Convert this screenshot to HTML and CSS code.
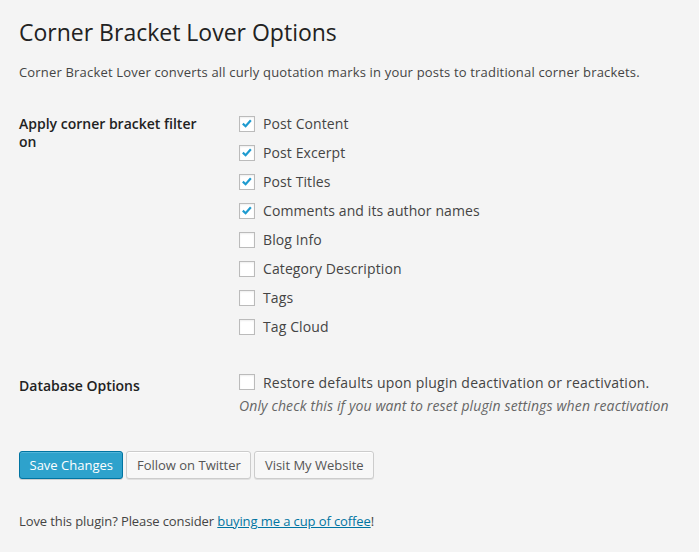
FILE: index.html
```html
<!DOCTYPE html>
<html>
<head>
<meta charset="utf-8">
<link rel="stylesheet" href="styles.css">
</head>
<body>
<div class="wrap">
  <h2 class="title">Corner Bracket Lover Options</h2>
  <p class="intro">Corner Bracket Lover converts all curly quotation marks in your posts to traditional corner brackets.</p>
  <div class="form-table">
    <div class="th th-first">Apply corner bracket filter on</div>
    <div class="td td-first">
      <label class="opt"><span class="cb"><svg viewBox="0 0 16 16" width="14" height="14"><path d="M3.2 7.6 L6.4 10.6 L12.4 3.8" fill="none" stroke="#1e9bd0" stroke-width="2.5"/></svg></span>Post Content</label>
      <label class="opt"><span class="cb"><svg viewBox="0 0 16 16" width="14" height="14"><path d="M3.2 7.6 L6.4 10.6 L12.4 3.8" fill="none" stroke="#1e9bd0" stroke-width="2.5"/></svg></span>Post Excerpt</label>
      <label class="opt"><span class="cb"><svg viewBox="0 0 16 16" width="14" height="14"><path d="M3.2 7.6 L6.4 10.6 L12.4 3.8" fill="none" stroke="#1e9bd0" stroke-width="2.5"/></svg></span>Post Titles</label>
      <label class="opt"><span class="cb"><svg viewBox="0 0 16 16" width="14" height="14"><path d="M3.2 7.6 L6.4 10.6 L12.4 3.8" fill="none" stroke="#1e9bd0" stroke-width="2.5"/></svg></span>Comments and its author names</label>
      <label class="opt"><span class="cb"></span>Blog Info</label>
      <label class="opt"><span class="cb"></span>Category Description</label>
      <label class="opt"><span class="cb"></span>Tags</label>
      <label class="opt"><span class="cb"></span>Tag Cloud</label>
    </div>
    <div class="th th-second">Database Options</div>
    <div class="td td-second">
      <label class="opt opt-restore"><span class="cb"></span>Restore defaults upon plugin deactivation or reactivation.</label>
      <p class="description">Only check this if you want to reset plugin settings when reactivation</p>
    </div>
  </div>
  <p class="submit"><a class="button button-primary">Save Changes</a><a class="button">Follow on Twitter</a><a class="button">Visit My Website</a></p>
  <p class="footer">Love this plugin? Please consider <a class="link" href="#">buying me a cup of coffee</a>!</p>
</div>
</body>
</html>
```
FILE: styles.css
```css
html, body {
  margin: 0;
  padding: 0;
  background: #f4f4f4;
}
body {
  font-family: "Open Sans", sans-serif;
  font-size: 13px;
  color: #444;
}
.wrap {
  padding: 0 19px;
}
.title {
  margin: 0;
  padding-top: 18px;
  font-size: 23px;
  font-weight: 400;
  line-height: 29px;
  color: #222;
}
.intro {
  margin: 15px 0 0;
  line-height: 20px;
  letter-spacing: 0.18px;
}
.form-table {
  display: grid;
  grid-template-columns: 220px 1fr;
  margin-top: 13px;
}
.th {
  font-size: 14px;
  font-weight: 600;
  line-height: 18px;
  color: #222;
  width: 190px;
  padding-top: 20px;
}
.td {
  padding-top: 15px;
  padding-bottom: 15px;
}
.td-first {
  padding-top: 14px;
  padding-bottom: 16px;
}
.opt {
  display: flex;
  align-items: center;
  height: 29px;
  font-size: 14px;
  color: #444;
  letter-spacing: 0.1px;
}
.opt-restore {
  height: 20px;
  letter-spacing: 0.22px;
}
.cb {
  box-sizing: border-box;
  width: 16px;
  height: 16px;
  border: 1px solid #bbb;
  background: #fff;
  box-shadow: inset 0 1px 2px rgba(0,0,0,.07);
  margin-right: 8px;
  display: flex;
  align-items: center;
  justify-content: center;
  flex: none;
}
.cb svg {
  display: block;
}
.description {
  margin: 5px 0 0;
  font-size: 14px;
  font-style: italic;
  line-height: 18px;
  color: #666;
  letter-spacing: 0.13px;
}
.submit {
  margin: 21px 0 0;
  display: flex;
  gap: 3px;
}
.button {
  display: inline-block;
  box-sizing: border-box;
  height: 28px;
  line-height: 26px;
  padding: 0 9.5px;
  font-size: 13px;
  border: 1px solid #ccc;
  border-radius: 3px;
  background: #f7f7f7;
  color: #555;
  box-shadow: inset 0 1px 0 #fff, 0 1px 0 rgba(0,0,0,.08);
}
.button-primary {
  background: #2ea2cc;
  border-color: #0074a2;
  color: #fff;
  box-shadow: inset 0 1px 0 rgba(120,200,230,.5), 0 1px 0 rgba(0,0,0,.15);
}
.footer {
  margin: 32px 0 0;
  line-height: 20px;
  letter-spacing: -0.1px;
}
.link {
  color: #0074a2;
}
```
